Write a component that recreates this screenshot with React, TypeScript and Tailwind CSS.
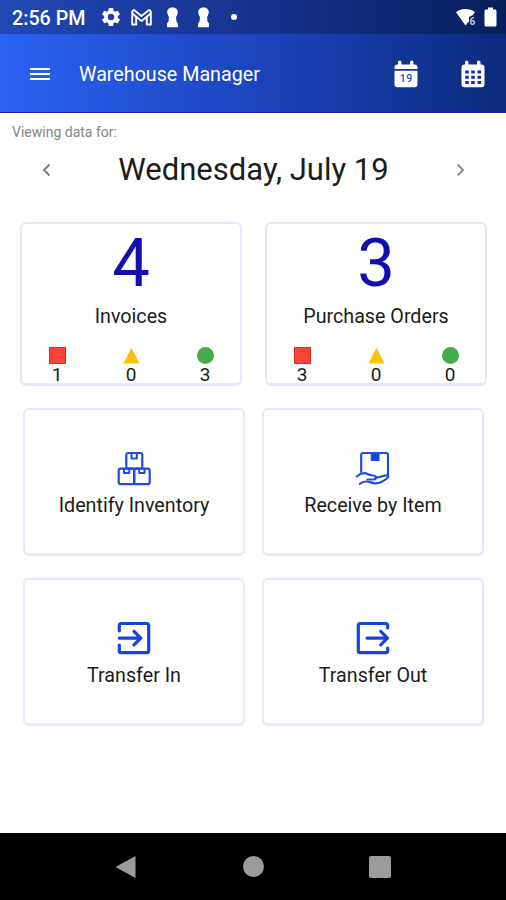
import { FC, ReactNode } from "react";

interface StatusCounts {
  red: number;
  yellow: number;
  green: number;
}

interface SummaryCardProps {
  total: number;
  label: string;
  counts: StatusCounts;
}

interface ActionCardProps {
  label: string;
  icon: ReactNode;
}

const GearIcon = () => (
  <svg width="20" height="20" viewBox="1 1 22 22" fill="#fff">
    <path d="M19.4 13c0-.3.1-.6.1-1s0-.7-.1-1l2.1-1.6c.2-.2.3-.4.1-.7l-2-3.4c-.1-.2-.4-.3-.6-.2l-2.5 1c-.5-.4-1.1-.7-1.7-1l-.4-2.600c0-.3-.2-.5-.4-.5h-4c-.3 0-.5.2-.5.5l-.4 2.600c-.6.3-1.200.6-1.700 1l-2.500-1c-.2-.1-.5 0-.6.2l-2 3.400c-.1.2-.1.5.1.7L4.500 11c0 .3-.1.6-.1 1s0 .7.1 1l-2.100 1.600c-.2.2-.3.4-.1.7l2 3.400c.1.2.4.3.6.2l2.500-1c.5.4 1.100.7 1.700 1l.4 2.600c0 .3.2.5.5.5h4c.2 0 .4-.2.4-.5l.4-2.600c.6-.3 1.200-.6 1.700-1l2.500 1c.2.1.5 0 .6-.2l2-3.400c.1-.2.1-.5-.1-.7zM12 15.500a3.500 3.500 0 1 1 0-7 3.500 3.500 0 0 1 0 7z" />
  </svg>
);

const MailIcon = () => (
  <svg width="21" height="17" viewBox="0 0 21 17" fill="none" stroke="#fff" strokeWidth="1.900" strokeLinejoin="round">
    <path d="M1.200 15.500V3.200Q1.200 1 3.300 1.200L10.500 7l7.200-5.800q2.100-.2 2.100 2v12.300h-4V7.800l-5.300 4.200-5.300-4.200v7.700z" />
    <path d="M5.200 7.800L1.400 4.500M15.800 7.800l3.800-3.300" />
  </svg>
);

const KeyholeIcon = () => (
  <svg width="13" height="21" viewBox="0 0 13 21" fill="#fff">
    <path d="M6.500.5c3 0 5.300 2 5.300 4.700 0 1-.3 1.800-.9 2.600.3.300.3.900-.1 1.300l-.8.9.5 4.500c.1.800 1.500 1.200 1.500 2.200v3.600H1v-3.600c0-1 1.400-1.400 1.500-2.200L3 10l-.8-.9c-.4-.4-.4-1-.1-1.300-.6-.8-.9-1.600-.9-2.600C1.200 2.500 3.500.5 6.500.5z" />
  </svg>
);

const WifiIcon = () => (
  <svg width="22" height="18" viewBox="0 0 22 18">
    <path d="M1 4.200C6-.1 15-.1 20 4.200L18 7l-4 2v4.300l-3.500 4.200z" fill="#fff" />
    <text x="14.500" y="16.500" fill="#b9c5ea" fontFamily="Roboto, sans-serif" fontSize="10" fontWeight="700">6</text>
  </svg>
);

const BatteryIcon = () => (
  <svg width="13" height="20" viewBox="0 0 13 20" fill="#fff">
    <path d="M4 .5h5v2h2q1.500 0 1.500 1.500v14q0 1.500-1.500 1.500H2Q.5 19.500.5 18V4Q.5 2.500 2 2.500h2z" />
  </svg>
);

const TodayIcon = () => (
  <svg width="24" height="28" viewBox="0 0 24 28">
    <path d="M4 4.500V2.200a1.400 1.400 0 0 1 3.500 0v2.300h8.500V2.200a1.400 1.400 0 0 1 3.500 0v2.300h1q3 0 3 3V9H.5V7.500q0-3 3-3z" fill="#fff" />
    <path d="M.5 10.700h23v13.500q0 3-3 3h-17q-3 0-3-3z" fill="#fff" />
    <text x="12.300" y="22" textAnchor="middle" fill="#2447b5" fontFamily="Roboto, sans-serif" fontSize="10.500" fontWeight="500" letterSpacing="0.500">19</text>
  </svg>
);

const CalendarIcon = () => (
  <svg width="24" height="28" viewBox="0 0 24 28">
    <path d="M3.500 4.500H4V2.200a1.400 1.400 0 0 1 3.500 0v2.300h8.500V2.200a1.400 1.400 0 0 1 3.500 0v2.300h1q3 0 3 3v16.700q0 3-3 3h-17q-3 0-3-3V7.500q0-3 3-3z" fill="#fff" />
    <path
      d="M4.200 10.500h3.600v3H4.200zM10.200 10.500h3.600v3h-3.600zM16.500 10.500h3.600v3h-3.600zM4.200 15.700h3.600v3H4.200zM10.200 15.700h3.600v3h-3.600zM16.500 15.700h3.600v3h-3.600zM4.200 20.900h3.600v3H4.200zM10.200 20.900h3.600v3h-3.600zM16.500 20.900h3.600v3h-3.600z"
      fill="#12339a"
    />
  </svg>
);

const BoxesIcon = () => (
  <svg width="34" height="35" viewBox="0 0 34 35" fill="none" stroke="#1f4de0" strokeWidth="2.200" strokeLinejoin="round">
    <rect x="9.300" y="2" width="16" height="15.700" rx="2" />
    <rect x="1.700" y="17.700" width="15.500" height="15.500" rx="2" />
    <rect x="17.200" y="17.700" width="15.500" height="15.500" rx="2" />
    <path d="M14.500 2.500v5h5.300v-5M7 18v4h5.300v-4M22.200 18v4h5.300v-4" strokeWidth="2" />
  </svg>
);

const HandBoxIcon = () => (
  <svg width="36" height="36" viewBox="0 0 36 36" fill="none" stroke="#1f4de0" strokeWidth="2.200" strokeLinecap="round" strokeLinejoin="round">
    <path d="M6.200 21V4q0-2 2-2h22.800q2 0 2 2v21" />
    <path d="M16.300 2.500h7.700v7h-7.700z" fill="#1745dc" strokeWidth="1.200" />
    <path d="M1.800 25.500c4-3.800 8-4 11.700-2 1.800 1 5 .5 6.700 1.600 2 1.500.4 3.500-2 3.400h-5.700" />
    <path d="M20.500 27l9.500-2.500c2.500-.6 4.300.8 2.300 2.500-3.300 2.900-7.300 5.500-11.800 5.400-3.700-.1-6.500-2.200-9.800-1.900-2.400.1-4.200 1.100-5.900 2.300" />
  </svg>
);

const TransferInIcon = () => (
  <svg width="34" height="34" viewBox="0 0 34 34" fill="none" stroke="#1745dc" strokeWidth="3.200" strokeLinecap="round" strokeLinejoin="round">
    <path d="M2.300 10V4.500q0-2 2-2h25.400q2 0 2 2v25.200q0 2-2 2H4.300q-2 0-2-2V24" />
    <path d="M2.300 17.100H23M17 10.300l6.800 6.800-6.800 6.800" />
  </svg>
);

const TransferOutIcon = () => (
  <svg width="34" height="34" viewBox="0 0 34 34" fill="none" stroke="#1745dc" strokeWidth="3.200" strokeLinecap="round" strokeLinejoin="round">
    <path d="M31.700 7V4.500q0-2-2-2H4.300q-2 0-2 2v25.200q0 2 2 2h25.400q2 0 2-2V27" />
    <path d="M11 17.100h20M24.700 10.300l6.800 6.800-6.800 6.800" />
  </svg>
);

const SummaryCard: FC<SummaryCardProps> = ({ total, label, counts }) => (
  <div className="h-[164px] w-[222px] rounded-md border-2 border-b-3 border-[#e5e9fc] flex flex-col items-center">
    <span className="h-[78px] text-[67px] leading-[78px] text-[#130fae]">{total}</span>
    <span className="mt-[3px] h-[24px] text-[19.7px] leading-[24px]">{label}</span>
    <div className="mt-[18px] grid w-[222px] grid-cols-3 justify-items-center text-[19px] leading-[22px]">
      <div className="flex w-6 flex-col items-center">
        <div className="h-[17px] w-[17px] border border-[#e02a20] bg-[#f94436]" />
        <span>{counts.red}</span>
      </div>
      <div className="flex w-6 flex-col items-center">
        <svg width="17" height="17" viewBox="0 0 17 17">
          <path d="M8.500 .8l8 15.700H.5z" fill="#fdc009" />
        </svg>
        <span>{counts.yellow}</span>
      </div>
      <div className="flex w-6 flex-col items-center">
        <div className="h-[17px] w-[17px] rounded-full bg-[#46ad4c]" />
        <span>{counts.green}</span>
      </div>
    </div>
  </div>
);

const ActionCard: FC<ActionCardProps> = ({ label, icon }) => (
  <div className="h-[148px] w-[222px] rounded-md border-2 border-b-3 border-[#e5e9fc] flex flex-col items-center pt-[41px]">
    <div className="flex h-[34px] justify-center">{icon}</div>
    <span className="mt-[9px] text-[19.7px] leading-[24px]">{label}</span>
  </div>
);

const App: FC = () => {
  return (
    <div className="flex h-[900px] w-[506px] flex-col bg-white font-['Roboto',sans-serif] text-[#1c1c1c]">
      <header className="h-[113px] border-b border-[#1a1fa5] bg-linear-to-r from-[#2b62f3] via-[#1c45bd] to-[#0a2b7c] text-white">
        <div className="flex h-[34px] items-center bg-black/25 pl-3 pr-[9px]">
          <span className="w-[89px] pt-[3px] text-[19.7px] font-medium">2:56 PM</span>
          <GearIcon />
          <div className="ml-[10px]"><MailIcon /></div>
          <div className="ml-[14px]"><KeyholeIcon /></div>
          <div className="ml-[18px]"><KeyholeIcon /></div>
          <div className="ml-[21px] h-[6px] w-[6px] rounded-full bg-white" />
          <div className="ml-auto"><WifiIcon /></div>
          <div className="ml-[7px]"><BatteryIcon /></div>
        </div>
        <div className="flex h-[78px] items-center pl-[30px] pr-[21px] pt-px">
          <div className="flex w-5 flex-col gap-[3px]">
            <div className="h-[2px] bg-white" />
            <div className="h-[2px] bg-white" />
            <div className="h-[2px] bg-white" />
          </div>
          <h1 className="ml-[29px] pt-[3px] text-[19.7px]">Warehouse Manager</h1>
          <div className="ml-auto"><TodayIcon /></div>
          <div className="ml-[43px]"><CalendarIcon /></div>
        </div>
      </header>

      <main className="flex-1">
        <p className="pl-3 pt-[10px] text-[14px] leading-[18px] text-[#858585]">Viewing data for:</p>
        <div className="flex h-[58px] items-center justify-between pl-[42px] pr-[41px]">
          <svg width="9" height="14" viewBox="0 0 9 14" fill="none" stroke="#777" strokeWidth="1.800">
            <path d="M7.500 1.500L2 7l5.500 5.500" />
          </svg>
          <h2 className="pb-[2px] text-[31px] leading-none">Wednesday, July 19</h2>
          <svg width="9" height="14" viewBox="0 0 9 14" fill="none" stroke="#888" strokeWidth="1.800">
            <path d="M1.500 1.500L7 7l-5.500 5.500" />
          </svg>
        </div>

        <div className="mt-[23px] flex gap-[23px] pl-5">
          <SummaryCard total={4} label="Invoices" counts={{ red: 1, yellow: 0, green: 3 }} />
          <SummaryCard total={3} label="Purchase Orders" counts={{ red: 3, yellow: 0, green: 0 }} />
        </div>

        <div className="mt-[22px] grid grid-cols-[222px_222px] gap-x-[17px] gap-y-[22px] pl-[23px]">
          <ActionCard label="Identify Inventory" icon={<BoxesIcon />} />
          <ActionCard label="Receive by Item" icon={<HandBoxIcon />} />
          <ActionCard label="Transfer In" icon={<TransferInIcon />} />
          <ActionCard label="Transfer Out" icon={<TransferOutIcon />} />
        </div>
      </main>

      <nav className="flex h-[67px] items-center bg-black pl-[115px]">
        <svg width="21" height="24" viewBox="0 0 21 24" fill="#9b9b9b">
          <path d="M20.500 1v22L.5 12z" />
        </svg>
        <div className="ml-[107px] h-[21px] w-[21px] rounded-full bg-[#9b9b9b]" />
        <div className="ml-[105px] h-[22px] w-[22px] rounded-[2px] bg-[#9b9b9b]" />
      </nav>
    </div>
  );
};

export default App;
